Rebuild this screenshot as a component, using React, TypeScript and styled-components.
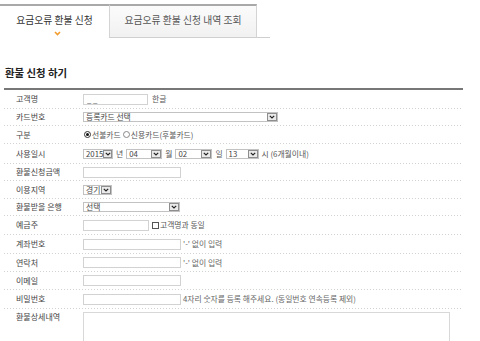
import React from 'react';
import styled, { createGlobalStyle } from 'styled-components';

const Global = createGlobalStyle`
  html, body { margin: 0; padding: 0; background: #fff; }
  body { font-family: "Noto Sans CJK KR", "Noto Sans", sans-serif; color: #555; }
`;

const Page = styled.div`
  width: 480px;
  height: 341px;
  overflow: hidden;
  background: #fff;
`;

const TabBar = styled.div`
  display: flex;
  margin-top: 4px;
  height: 34px;
`;

const Tab = styled.div<{ $active?: boolean; $w: number }>`
  position: relative;
  width: ${p => p.$w}px;
  box-sizing: border-box;
  border-top: 2px solid #a9a9a9;
  display: flex;
  align-items: flex-start;
  justify-content: center;
  padding-top: 8px;
  font-size: 9.8px;
  line-height: 13px;
  color: ${p => (p.$active ? '#333' : '#555')};
  background: ${p => (p.$active ? '#fff' : 'linear-gradient(#fbfbfb, #f1f1f1)')};
  border-left: ${p => (p.$active ? 'none' : '1px solid #d4d4d4')};
  border-right: ${p => (p.$active ? 'none' : '1px solid #d4d4d4')};
  border-bottom: ${p => (p.$active ? 'none' : '1px solid #cfcfcf')};
`;

const TabMark = styled.svg`
  position: absolute;
  left: 54px;
  top: 25px;
`;

const TabFill = styled.div`
  width: 13px;
  box-sizing: border-box;
  border-bottom: 1px solid #cfcfcf;
`;

const Heading = styled.h2`
  margin: 28px 0 8px 5px;
  font-size: 10.4px;
  line-height: 14px;
  font-weight: 700;
  color: #222;
`;

const Table = styled.div`
  margin-left: 4px;
  width: 459px;
  border-top: 2px solid #777;
`;

const Row = styled.div<{ $h: number; $top?: boolean }>`
  display: grid;
  grid-template-columns: 79px 1fr;
  align-items: ${p => (p.$top ? 'start' : 'center')};
  height: ${p => p.$h}px;
  box-sizing: border-box;
  padding-bottom: 1px;
  background-image: linear-gradient(to right, #d2d2d2 1px, transparent 1px);
  background-size: 3px 1px;
  background-repeat: repeat-x;
  background-position: left bottom;
`;

const Label = styled.div<{ $pt?: number }>`
  padding-left: 12px;
  padding-top: ${p => p.$pt ?? 0}px;
  font-size: 8px;
  line-height: 10px;
  color: #444;
  white-space: nowrap;
`;

const Field = styled.div<{ $gap?: number; $pt?: number }>`
  display: flex;
  align-items: center;
  gap: ${p => p.$gap ?? 3}px;
  padding-top: ${p => p.$pt ?? 0}px;
  font-size: 7.8px;
  line-height: 10px;
  color: #555;
  white-space: nowrap;
`;

const TextInput = styled.input<{ $w: number }>`
  width: ${p => p.$w}px;
  height: 11px;
  box-sizing: border-box;
  border: 1px solid #d2d2d2;
  margin: 0;
  padding: 0 3px;
  font-family: inherit;
  font-size: 7.8px;
  color: #444;
  background: #fff;
  outline: none;
`;

const Select = styled.div<{ $w: number }>`
  width: ${p => p.$w}px;
  height: 10px;
  box-sizing: border-box;
  border: 1px solid #c2c2c2;
  display: flex;
  align-items: center;
  justify-content: space-between;
  padding-left: 2px;
  font-size: 7.8px;
  color: #444;
  background: #fff;
`;

const Arrow = styled.span`
  width: 10px;
  height: 8px;
  box-sizing: border-box;
  border: 1px solid #8e8e8e;
  background: #eaeaea;
  display: flex;
  align-items: center;
  justify-content: center;
`;

const Radio = styled.span<{ $on?: boolean }>`
  width: 7px;
  height: 7px;
  box-sizing: border-box;
  border-radius: 50%;
  border: 1px solid ${p => (p.$on ? '#333' : '#888')};
  display: inline-flex;
  align-items: center;
  justify-content: center;
  margin-right: -1px;
  &::after {
    content: '';
    width: 3px;
    height: 3px;
    border-radius: 50%;
    background: ${p => (p.$on ? '#111' : 'transparent')};
  }
`;

const Check = styled.span`
  width: 7px;
  height: 7px;
  box-sizing: border-box;
  border: 1px solid #555;
  background: #fff;
  margin-right: -2px;
`;

const Note = styled.span`
  color: #666;
`;

const Memo = styled.textarea`
  width: 367px;
  height: 40px;
  box-sizing: border-box;
  border: 1px solid #d8d8d8;
  margin: 0;
  resize: none;
  font-family: inherit;
  font-size: 7px;
  outline: none;
`;

const Chevron = () => (
  <svg width="6" height="4" viewBox="0 0 6 4">
    <polyline points="0.8,0.8 3,3 5.2,0.8" fill="none" stroke="#222" strokeWidth="1.2" />
  </svg>
);

const Sel = ({ w, v }: { w: number; v: string }) => (
  <Select $w={w}>
    <span>{v}</span>
    <Arrow>
      <Chevron />
    </Arrow>
  </Select>
);

export default function App() {
  return (
    <Page>
      <Global />
      <TabBar>
        <Tab $active $w={109}>
          요금오류 환불 신청
          <TabMark width="7" height="5" viewBox="0 0 7 5">
            <polyline points="1,1 3.5,3.5 6,1" fill="none" stroke="#f29b2e" strokeWidth="1.6" />
          </TabMark>
        </Tab>
        <Tab $w={148}>요금오류 환불 신청 내역 조회</Tab>
        <TabFill />
      </TabBar>

      <Heading>환불 신청 하기</Heading>

      <Table>
        <Row $h={19}>
          <Label>고객명</Label>
          <Field $gap={4}>
            <TextInput $w={65} readOnly value="_ _" />
            한글
          </Field>
        </Row>
        <Row $h={17}>
          <Label>카드번호</Label>
          <Field>
            <Sel w={195} v="등록카드 선택" />
          </Field>
        </Row>
        <Row $h={18}>
          <Label>구분</Label>
          <Field $gap={2}>
            <Radio $on style={{ marginLeft: 1 }} />
            선불카드
            <Radio />
            신용카드(후불카드)
          </Field>
        </Row>
        <Row $h={20}>
          <Label>사용일시</Label>
          <Field>
            <Sel w={30} v="2015" />
            년
            <Sel w={36} v="04" />
            월
            <Sel w={37} v="02" />
            일
            <Sel w={33} v="13" />
            시 (6개월이내)
          </Field>
        </Row>
        <Row $h={17}>
          <Label>환불신청금액</Label>
          <Field>
            <TextInput $w={98} readOnly value="" />
          </Field>
        </Row>
        <Row $h={18}>
          <Label>이용지역</Label>
          <Field>
            <Sel w={29} v="경기" />
          </Field>
        </Row>
        <Row $h={17}>
          <Label>환불받을 은행</Label>
          <Field>
            <Sel w={97} v="선택" />
          </Field>
        </Row>
        <Row $h={19}>
          <Label>예금주</Label>
          <Field>
            <TextInput $w={66} readOnly value="" />
            <Check />
            고객명과 동일
          </Field>
        </Row>
        <Row $h={19}>
          <Label>계좌번호</Label>
          <Field $gap={2}>
            <TextInput $w={98} readOnly value="" />
            <Note>'-' 없이 입력</Note>
          </Field>
        </Row>
        <Row $h={18}>
          <Label>연락처</Label>
          <Field $gap={2}>
            <TextInput $w={98} readOnly value="" />
            <Note>'-' 없이 입력</Note>
          </Field>
        </Row>
        <Row $h={18}>
          <Label>이메일</Label>
          <Field>
            <TextInput $w={98} readOnly value="" />
          </Field>
        </Row>
        <Row $h={19}>
          <Label>비밀번호</Label>
          <Field $gap={2}>
            <TextInput $w={98} readOnly value="" />
            <Note>4자리 숫자를 등록 해주세요. (동일번호 연속등록 제외)</Note>
          </Field>
        </Row>
        <Row $h={60} $top>
          <Label $pt={3}>환불상세내역</Label>
          <Field $pt={3}>
            <Memo readOnly />
          </Field>
        </Row>
      </Table>
    </Page>
  );
}
